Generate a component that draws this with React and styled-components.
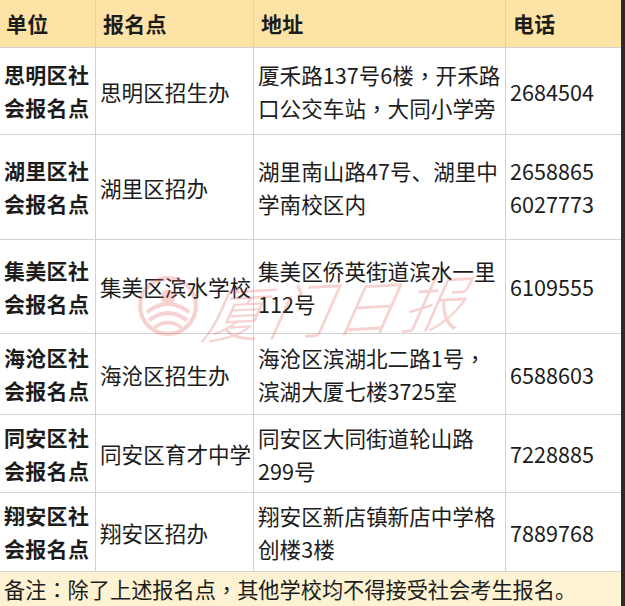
import React from "react";
import styled, { createGlobalStyle } from "styled-components";

const GlobalStyle = createGlobalStyle`
  html, body {
    margin: 0;
    padding: 0;
    background: #ffffff;
  }
  body {
    font-family: "Noto Sans CJK SC", "Noto Sans", sans-serif;
    color: #1c1c1c;
  }
`;

const Sheet = styled.div`
  position: relative;
  width: 621px;
  height: 606px;
  border-right: 4px solid #2b2b2b;
  overflow: hidden;
  display: flex;
  flex-direction: column;
`;

const Row = styled.div`
  display: grid;
  grid-template-columns: 96px 158px 252px 115px;
  height: ${(p) => p.$h}px;
  background: ${(p) => (p.$head ? "#fde4a6" : "#ffffff")};
  border-bottom: 1px solid #d2d2d2;
  box-sizing: border-box;
`;

const Cell = styled.div`
  display: flex;
  align-items: center;
  padding: 0 2px 0 ${(p) => p.$pad || 4}px;
  border-right: 1px solid #d2d2d2;
  box-sizing: border-box;
  font-size: ${(p) => (p.$bold ? 21 : 21.6)}px;
  line-height: 33px;
  font-weight: ${(p) => (p.$bold ? 700 : 400)};
  letter-spacing: ${(p) => (p.$bold ? "0.3px" : "0")};
  white-space: nowrap;

  &:last-child {
    border-right: none;
  }
`;

// centred full-width punctuation, as the source sheet renders it
const Punct = styled.span`
  font-family: "Noto Sans CJK TC", sans-serif;
`;

const Note = styled.div`
  flex: 1;
  background: #fdf3d2;
  display: flex;
  align-items: center;
  padding-left: 4px;
  font-size: 21.2px;
  line-height: 30px;
  white-space: nowrap;
`;

const Watermark = styled.div`
  position: absolute;
  left: 136px;
  top: 262px;
  display: flex;
  align-items: center;
  gap: 6px;
  pointer-events: none;
  opacity: 0.26;
`;

const MarkText = styled.span`
  font-family: "Noto Sans CJK SC", sans-serif;
  font-style: italic;
  font-weight: 300;
  font-size: 60px;
  letter-spacing: 6px;
  color: #e0554f;
  transform: skewX(-14deg) rotate(-3deg);
`;

const withPunct = (text) =>
  text.split(/([，：])/).map((part, i) =>
    part === "，" || part === "：" ? <Punct key={i}>{part}</Punct> : part
  );

const Lines = ({ lines }) =>
  lines.map((l, i) => (
    <React.Fragment key={i}>
      {withPunct(l)}
      {i < lines.length - 1 && <br />}
    </React.Fragment>
  ));

const rows = [
  {
    h: 87,
    unit: ["思明区社", "会报名点"],
    place: "思明区招生办",
    addr: ["厦禾路137号6楼，开禾路", "口公交车站，大同小学旁"],
    tel: ["2684504"],
  },
  {
    h: 105,
    unit: ["湖里区社", "会报名点"],
    place: "湖里区招办",
    addr: ["湖里南山路47号、湖里中", "学南校区内"],
    tel: ["2658865", "6027773"],
  },
  {
    h: 94,
    unit: ["集美区社", "会报名点"],
    place: "集美区滨水学校",
    addr: ["集美区侨英街道滨水一里", "112号"],
    tel: ["6109555"],
  },
  {
    h: 81,
    unit: ["海沧区社", "会报名点"],
    place: "海沧区招生办",
    addr: ["海沧区滨湖北二路1号，", "滨湖大厦七楼3725室"],
    tel: ["6588603"],
  },
  {
    h: 78,
    unit: ["同安区社", "会报名点"],
    place: "同安区育才中学",
    addr: ["同安区大同街道轮山路", "299号"],
    tel: ["7228885"],
  },
  {
    h: 79,
    unit: ["翔安区社", "会报名点"],
    place: "翔安区招办",
    addr: ["翔安区新店镇新店中学格", "创楼3楼"],
    tel: ["7889768"],
  },
];

const Logo = () => (
  <svg width="64" height="64" viewBox="0 0 62 62">
    <g fill="none" stroke="#e0554f" strokeLinecap="round">
      <circle cx="31" cy="31" r="27" strokeWidth="4" />
      <path d="M12 36 Q31 22 50 36" strokeWidth="4" />
      <path d="M14 44 Q31 32 48 44" strokeWidth="4" />
      <path d="M19 51 Q31 43 43 51" strokeWidth="3.5" />
    </g>
    <circle cx="31" cy="22" r="7" fill="#e0554f" />
  </svg>
);

export default function App() {
  return (
    <>
      <GlobalStyle />
      <Sheet>
        <Row $head $h={48}>
          <Cell $bold $pad={6}>单位</Cell>
          <Cell $bold $pad={7}>报名点</Cell>
          <Cell $bold $pad={7}>地址</Cell>
          <Cell $bold $pad={7}>电话</Cell>
        </Row>
        {rows.map((r, i) => (
          <Row key={i} $h={r.h}>
            <Cell $bold $pad={4}>
              <div>
                <Lines lines={r.unit} />
              </div>
            </Cell>
            <Cell>{r.place}</Cell>
            <Cell>
              <div>
                <Lines lines={r.addr} />
              </div>
            </Cell>
            <Cell>
              <div>
                <Lines lines={r.tel} />
              </div>
            </Cell>
          </Row>
        ))}
        <Note>{withPunct("备注：除了上述报名点，其他学校均不得接受社会考生报名。")}</Note>
        <Watermark>
          <Logo />
          <MarkText>厦门日报</MarkText>
        </Watermark>
      </Sheet>
    </>
  );
}
